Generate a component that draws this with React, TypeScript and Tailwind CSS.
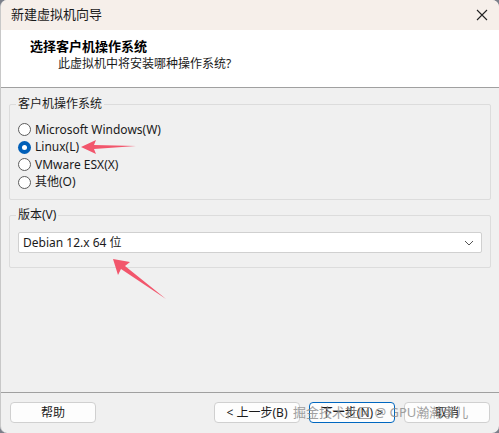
import React from "react";

const font = { fontFamily: '"Noto Sans", "Noto Sans CJK SC", sans-serif' };

function Radio({ label, checked }: { label: string; checked?: boolean }) {
  return (
    <label className="flex items-center gap-[4px] h-[17.5px]">
      <span
        className={`w-[13px] h-[13px] rounded-full flex items-center justify-center ${
          checked ? "bg-[#005fb8]" : "border border-[#5c5c5c] bg-white"
        }`}
      >
        {checked && <span className="w-[5px] h-[5px] rounded-full bg-white" />}
      </span>
      <span className="text-[12px] text-[#1a1a1a]">{label}</span>
    </label>
  );
}

function Btn({ label, focused }: { label: string; focused?: boolean }) {
  return (
    <button
      className={`w-[86px] h-[21px] rounded-[4px] bg-[#fdfdfd] text-[12px] text-[#1a1a1a] leading-none ${
        focused ? "border border-[#0067c0]" : "border border-[#d0d0d0]"
      }`}
    >
      {label}
    </button>
  );
}

export default function App() {
  return (
    <div className="w-[499px] h-[433px] bg-[#7b7f8a] relative overflow-hidden" style={font}>
      <div className="w-full h-full bg-[#f0f0f0] rounded-[7px] flex flex-col overflow-hidden border-l border-[#c8c8c8]">
        {/* title bar */}
        <div className="h-[30px] bg-[#f6efea] flex items-center justify-between pl-[10px] pr-[8px] shrink-0">
          <span className="text-[13px] text-[#1a1a1a]">新建虚拟机向导</span>
          <svg width="14" height="14" viewBox="0 0 14 14" className="mr-[2px]">
            <path d="M2 2L12 12M12 2L2 12" stroke="#222" strokeWidth="1.1" />
          </svg>
        </div>

        {/* header */}
        <div className="h-[58px] bg-white border-b border-[#a0a0a0] shrink-0 pt-[7px] pl-[29px]">
          <div className="text-[13px] font-bold text-[#000] leading-[18px]">选择客户机操作系统</div>
          <div className="text-[12px] text-[#1a1a1a] leading-[18px] pl-[28px]">此虚拟机中将安装哪种操作系统?</div>
        </div>

        {/* body */}
        <div className="flex-1 px-[8px] pt-[16px]">
          <div className="relative border border-[#dcdcdc] rounded-[2px] pt-[16px] pl-[8px] h-[96px]">
            <span className="absolute -top-[10px] left-[6px] bg-[#f0f0f0] px-[2px] text-[12px] text-[#1a1a1a]">
              客户机操作系统
            </span>
            <div className="flex flex-col">
              <Radio label="Microsoft Windows(W)" />
              <Radio label="Linux(L)" checked />
              <Radio label="VMware ESX(X)" />
              <Radio label="其他(O)" />
            </div>
          </div>

          <div className="relative border border-[#dcdcdc] rounded-[2px] mt-[15px] h-[53px] px-[8px] pt-[16px]">
            <span className="absolute -top-[10px] left-[6px] bg-[#f0f0f0] px-[2px] text-[12px] text-[#1a1a1a]">
              版本(V)
            </span>
            <div className="h-[21px] bg-white border border-[#d0d0d0] rounded-[2px] flex items-center justify-between pl-[4px] pr-[7px]">
              <span className="text-[12px] text-[#1a1a1a]">Debian 12.x 64 位</span>
              <svg width="10" height="6" viewBox="0 0 10 6">
                <path d="M1 1L5 5L9 1" fill="none" stroke="#555" strokeWidth="1" />
              </svg>
            </div>
          </div>
        </div>

        {/* footer */}
        <div className="h-[41px] border-t border-[#a0a0a0] shrink-0 flex items-center justify-between px-[9px] pb-[1px]">
          <Btn label="帮助" />
          <div className="flex gap-[9px]">
            <Btn label="< 上一步(B)" />
            <Btn label="下一步(N) >" focused />
            <Btn label="取消" />
          </div>
        </div>
      </div>

      {/* callout arrows */}
      <svg className="absolute inset-0 pointer-events-none" width="499" height="433" viewBox="0 0 499 433">
        <polygon points="81,147 96,140 94,145 136,146 94,149 96,154" fill="#f2566c" />
        <polygon points="113,259 130,262 125,266 166,299 121,269 118,275" fill="#f2566c" />
      </svg>

      {/* watermark */}
      <span className="absolute left-[293px] top-[403px] text-[13px] text-[#8a8a8a] opacity-80 pointer-events-none whitespace-nowrap">
        掘金技术社区 @ GPU瀚瀚事儿
      </span>
    </div>
  );
}
